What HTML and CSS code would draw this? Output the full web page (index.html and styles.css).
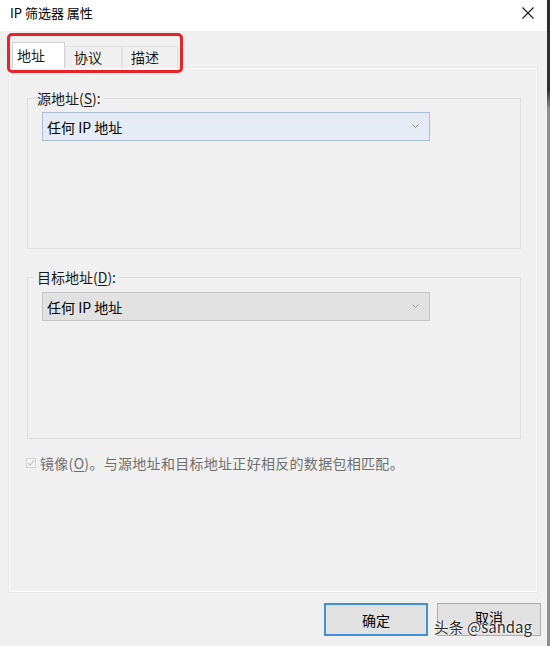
FILE: index.html
```html
<!DOCTYPE html>
<html lang="zh-CN">
<head>
<meta charset="utf-8">
<title>IP 筛选器 属性</title>
<link rel="stylesheet" href="styles.css">
</head>
<body>
<div class="window">
  <header class="titlebar">
    <span class="title">IP 筛选器 属性</span>
    <svg class="close" width="12" height="12" viewBox="0 0 12 12"><path d="M0.5 0.5 L11.5 11.5 M11.5 0.5 L0.5 11.5" stroke="#1a1a1a" stroke-width="1.1" fill="none"/></svg>
  </header>
  <main class="dialog">
    <div class="tabs-wrap">
      <div class="tabs">
        <div class="tab active">地址</div>
        <div class="tab">协议</div>
        <div class="tab">描述</div>
      </div>
      <div class="annot"></div>
    </div>
    <section class="panel">
      <fieldset class="group group-src">
        <legend>源地址(<u>S</u>):</legend>
        <div class="combo combo-hover"><span>任何 IP 地址</span><svg class="chev" width="7" height="4" viewBox="0 0 7 4"><path d="M0.5 0.5 L3.5 3.5 L6.5 0.5" stroke="#8a8a8a" fill="none"/></svg></div>
      </fieldset>
      <fieldset class="group group-dst">
        <legend>目标地址(<u>D</u>):</legend>
        <div class="combo"><span>任何 IP 地址</span><svg class="chev" width="7" height="4" viewBox="0 0 7 4"><path d="M0.5 0.5 L3.5 3.5 L6.5 0.5" stroke="#9a9a9a" fill="none"/></svg></div>
      </fieldset>
      <label class="mirror"><span class="cb"><svg width="8" height="8" viewBox="0 0 8 8"><path d="M1 4 L3.2 6.2 L7 1.5" stroke="#c4c4c4" stroke-width="1.2" fill="none"/></svg></span>镜像(<u>O</u>)。与源地址和目标地址正好相反的数据包相匹配。</label>
    </section>
    <footer class="buttons">
      <button class="btn btn-default">确定</button>
      <button class="btn btn-cancel">取消</button>
      <span class="watermark">头条 @sandag</span>
    </footer>
  </main>
</div>
</body>
</html>
```

FILE: styles.css
```css
html, body {
  margin: 0;
  padding: 0;
  background: #f0f0f0;
}
body {
  font-family: "Noto Sans CJK SC", "Noto Sans", sans-serif;
  font-size: 14px;
  color: #1a1a1a;
}
.window {
  width: 547px;
  height: 646px;
  background: #f0f0f0;
  border-right: 3px solid #8a8a8a;
  border-image: linear-gradient(#2e2e2e 0, #2e2e2e 90px, #8f8f8f 110px, #8f8f8f 100%) 1;
  display: flex;
  flex-direction: column;
}
.titlebar {
  height: 31px;
  background: #ffffff;
  display: flex;
  align-items: center;
  justify-content: space-between;
  padding: 0 13px 0 10px;
  flex: none;
}
.title {
  font-size: 13px;
  color: #000;
  line-height: 20px;
  margin-top: -5px;
}
.close {
  display: block;
  margin-top: -5px;
}
.dialog {
  flex: 1;
  padding: 11px 6px 0 9px;
  display: flex;
  flex-direction: column;
}
.tabs-wrap {
  position: relative;
  height: 26px;
}
.tabs {
  display: flex;
  align-items: flex-end;
  height: 26px;
  margin-left: 3px;
}
.tab {
  box-sizing: border-box;
  height: 22px;
  line-height: 21px;
  padding-left: 8px;
  border: 1px solid #e2e2e2;
  border-bottom: none;
  background: #f0f0f0;
  color: #1a1a1a;
}
.tab:nth-child(2) { width: 57px; }
.tab:nth-child(3) { width: 56px; }
.tab.active {
  width: 53px;
  height: 26px;
  line-height: 25px;
  padding-left: 4px;
  background: #ffffff;
  border-color: #d4d4d4;
}
.annot {
  position: absolute;
  left: -2px;
  top: -9px;
  width: 170px;
  height: 34px;
  border: 3px solid #e8232a;
  border-radius: 5px;
}
.panel {
  box-sizing: border-box;
  width: 528px;
  height: 524px;
  border: 1px solid #ffffff;
  box-shadow: 0 0 0 1px #e6e6e6;
  background: #f0f0f0;
  padding: 0 0 0 17px;
}
.group {
  box-sizing: border-box;
  width: 494px;
  margin: 0;
  border: 1px solid #dedede;
  padding: 4px 14px 107px 14px;
  min-width: 0;
}
.group-src {
  margin-top: 19px;
}
.group-dst {
  margin-top: 18px;
  padding-top: 5px;
  padding-bottom: 117px;
}
.group legend {
  line-height: 20px;
  padding: 0 2px;
  margin-left: -7px;
  color: #1a1a1a;
}
u {
  text-decoration-thickness: 1px;
  text-underline-offset: 2px;
}
.combo {
  box-sizing: border-box;
  width: 388px;
  height: 29px;
  border: 1px solid #c4c4c4;
  background: #e1e1e1;
  display: flex;
  align-items: center;
  justify-content: space-between;
  padding: 0 10px 0 4px;
  color: #000;
}
.combo-hover {
  background: #e4ebf4;
  border-color: #aabdd3;
}
.chev {
  display: block;
  margin-top: -2px;
}
.mirror {
  display: flex;
  align-items: center;
  margin-top: 14px;
  line-height: 20px;
  color: #6f6f6f;
  letter-spacing: 0.3px;
}
.cb {
  box-sizing: border-box;
  width: 10px;
  height: 10px;
  border: 1px solid #d2d2d2;
  background: #f4f4f4;
  display: flex;
  align-items: center;
  justify-content: center;
  margin-right: 4px;
  margin-left: -1px;
}
.cb svg { display: block; }
.buttons {
  position: relative;
  display: flex;
  justify-content: flex-end;
  gap: 9px;
  margin-top: 11px;
}
.btn {
  box-sizing: border-box;
  width: 104px;
  height: 33px;
  border: 1px solid #adadad;
  background: #e1e1e1;
  font-family: "Noto Sans CJK SC", "Noto Sans", sans-serif;
  font-size: 14px;
  color: #000;
  padding: 0;
}
.btn-cancel {
  padding-bottom: 6px;
}
.btn-default {
  border: 2px solid #3f8fdb;
}
.watermark {
  position: absolute;
  right: 9px;
  top: 14px;
  font-size: 15px;
  line-height: 20px;
  color: #2a2a2a;
  text-shadow: 0 0 2px #fff, 0 0 2px #fff, 0 0 1px #fff;
}
```
